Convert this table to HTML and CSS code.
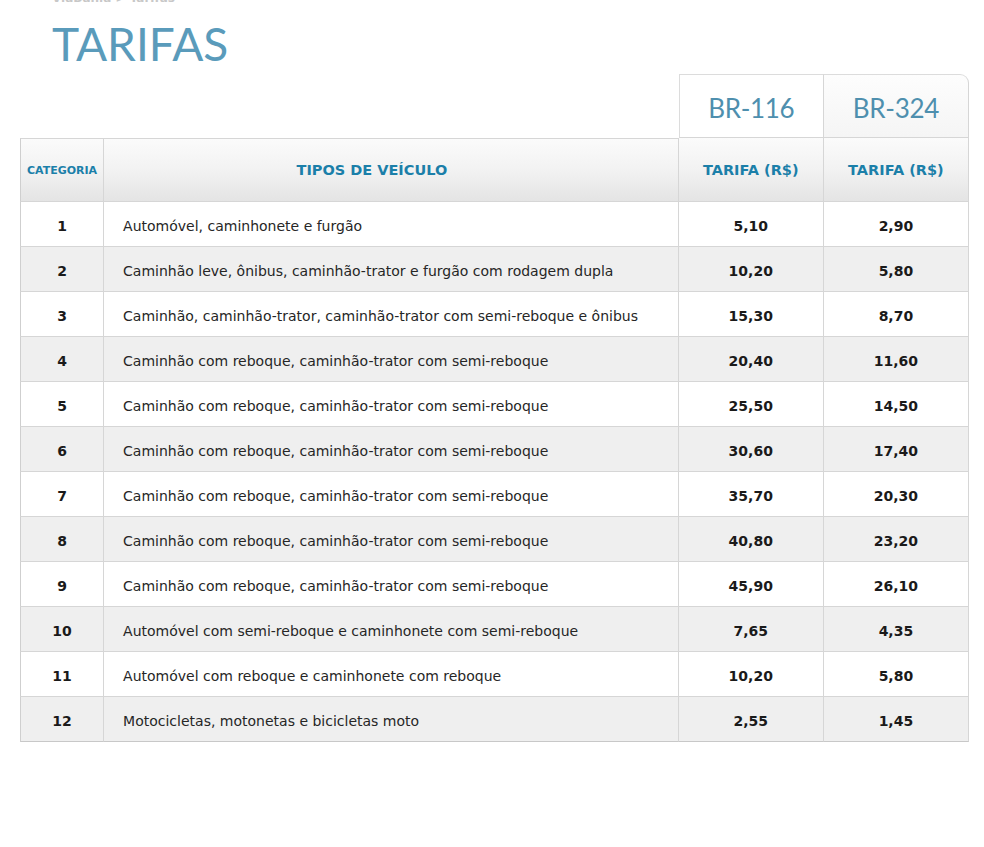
FILE: index.html
```html
<!DOCTYPE html>
<html lang="pt-BR">
<head>
<meta charset="utf-8">
<title>Tarifas</title>
<link rel="stylesheet" href="styles.css">
</head>
<body>
<div class="page">
  <div class="crumb">ViaBahia &gt; Tarifas</div>
  <h1 class="title">TARIFAS</h1>
  <table class="tarifas">
    <colgroup>
      <col class="c-cat"><col class="c-tipo"><col class="c-br"><col class="c-br">
    </colgroup>
    <thead>
      <tr class="road-row">
        <th class="blank"></th><th class="blank"></th>
        <th class="road first">BR-116</th><th class="road last">BR-324</th>
      </tr>
      <tr class="head-row">
        <th class="h-cat">CATEGORIA</th>
        <th class="h-tipo">TIPOS DE VEÍCULO</th>
        <th class="h-tar">TARIFA (R$)</th>
        <th class="h-tar">TARIFA (R$)</th>
      </tr>
    </thead>
    <tbody>
      <tr><td class="cat">1</td><td class="tipo">Automóvel, caminhonete e furgão</td><td class="val">5,10</td><td class="val">2,90</td></tr>
      <tr><td class="cat">2</td><td class="tipo">Caminhão leve, ônibus, caminhão-trator e furgão com rodagem dupla</td><td class="val">10,20</td><td class="val">5,80</td></tr>
      <tr><td class="cat">3</td><td class="tipo">Caminhão, caminhão-trator, caminhão-trator com semi-reboque e ônibus</td><td class="val">15,30</td><td class="val">8,70</td></tr>
      <tr><td class="cat">4</td><td class="tipo">Caminhão com reboque, caminhão-trator com semi-reboque</td><td class="val">20,40</td><td class="val">11,60</td></tr>
      <tr><td class="cat">5</td><td class="tipo">Caminhão com reboque, caminhão-trator com semi-reboque</td><td class="val">25,50</td><td class="val">14,50</td></tr>
      <tr><td class="cat">6</td><td class="tipo">Caminhão com reboque, caminhão-trator com semi-reboque</td><td class="val">30,60</td><td class="val">17,40</td></tr>
      <tr><td class="cat">7</td><td class="tipo">Caminhão com reboque, caminhão-trator com semi-reboque</td><td class="val">35,70</td><td class="val">20,30</td></tr>
      <tr><td class="cat">8</td><td class="tipo">Caminhão com reboque, caminhão-trator com semi-reboque</td><td class="val">40,80</td><td class="val">23,20</td></tr>
      <tr><td class="cat">9</td><td class="tipo">Caminhão com reboque, caminhão-trator com semi-reboque</td><td class="val">45,90</td><td class="val">26,10</td></tr>
      <tr><td class="cat">10</td><td class="tipo">Automóvel com semi-reboque e caminhonete com semi-reboque</td><td class="val">7,65</td><td class="val">4,35</td></tr>
      <tr><td class="cat">11</td><td class="tipo">Automóvel com reboque e caminhonete com reboque</td><td class="val">10,20</td><td class="val">5,80</td></tr>
      <tr><td class="cat">12</td><td class="tipo">Motocicletas, motonetas e bicicletas moto</td><td class="val">2,55</td><td class="val">1,45</td></tr>
    </tbody>
  </table>
</div>
</body>
</html>
```
FILE: styles.css
```css
html, body {
  margin: 0;
  padding: 0;
  background: #fff;
}
.page {
  padding: 0 15px 0 20px;
  font-family: "DejaVu Sans", sans-serif;
  color: #222;
}
.crumb {
  margin: -9px 0 0 32px;
  height: 15px;
  font-size: 12px;
  line-height: 15px;
  font-weight: bold;
  color: #c8c8c8;
}
.title {
  margin: 10px 0 2px 32px;
  height: 56px;
  font-family: Lato, "Open Sans", sans-serif;
  font-weight: 400;
  font-size: 46px;
  line-height: 56px;
  color: #5a9bbb;
}
.tarifas {
  width: 949px;
  table-layout: fixed;
  border-collapse: separate;
  border-spacing: 0;
}
.c-cat { width: 84px; }
.c-tipo { width: 574px; }
.c-br { width: 145px; }
.tarifas th, .tarifas td {
  padding: 0;
  border-right: 1px solid #d6d6d6;
  border-bottom: 1px solid #d6d6d6;
}
.tarifas th:first-child, .tarifas td:first-child {
  border-left: 1px solid #cfcfcf;
}
.road-row th.blank {
  border: none;
}
.road-row th.road {
  height: 58px;
  border-top: 1px solid #dcdcdc;
  font-family: Lato, "Open Sans", sans-serif;
  font-weight: 400;
  font-size: 26px;
  line-height: 30px;
  letter-spacing: -0.3px;
  color: #4e8fae;
  background: #fff;
  vertical-align: middle;
  padding: 4px 0 0;
}
.road-row th.first {
  border-left: 1px solid #dcdcdc;
}
.road-row th.last {
  border-top-right-radius: 9px;
  background: linear-gradient(#fdfdfd, #f5f5f5);
}
.head-row th {
  height: 62px;
  background: linear-gradient(#fbfbfb 0%, #f2f2f2 50%, #e4e4e4 100%);
  color: #1b7fa9;
  font-weight: bold;
}
.head-row th.h-cat, .head-row th.h-tipo {
  border-top: 1px solid #d6d6d6;
}
.head-row th.h-cat {
  font-size: 11px;
}
.head-row th.h-tipo {
  font-size: 14.5px;
  padding-right: 38px;
}
.head-row th.h-tar {
  font-size: 14.5px;
}
.tarifas tbody td {
  height: 41px;
  padding-top: 3px;
  font-size: 14px;
}
.tarifas tbody tr:nth-child(even) td {
  background: #efefef;
}
.tarifas tbody tr:last-child td {
  border-bottom: 1px solid #c8c8c8;
}
td.cat {
  text-align: center;
  font-weight: bold;
  font-size: 14.5px;
  color: #1a1a1a;
}
.tarifas tbody td.tipo {
  padding-left: 19px;
  color: #262626;
}
td.val {
  text-align: center;
  font-weight: bold;
  font-size: 14.5px;
  color: #1a1a1a;
}
```
